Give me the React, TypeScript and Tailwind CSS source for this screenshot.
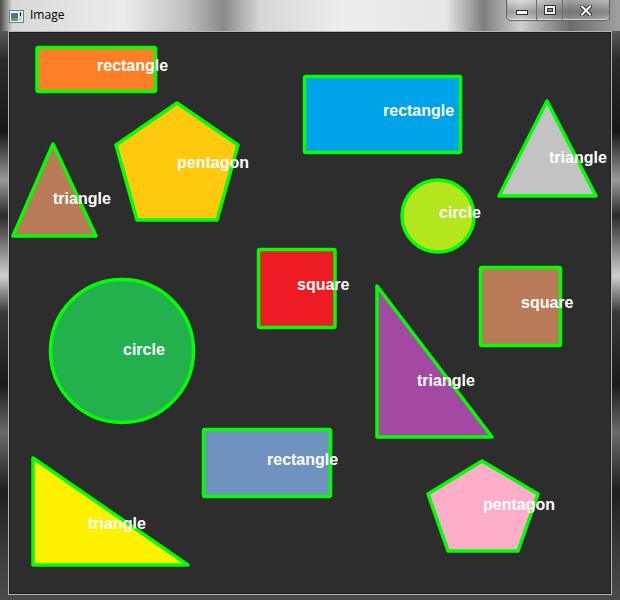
type Shape =
  | { kind: "rect"; x: number; y: number; w: number; h: number; fill: string; label: string; lx: number; ly: number }
  | { kind: "circle"; cx: number; cy: number; r: number; fill: string; label: string; lx: number; ly: number }
  | { kind: "poly"; points: string; fill: string; label: string; lx: number; ly: number };

// contours found on the test image, coordinates in window pixels
const shapes: Shape[] = [
  { kind: "rect", x: 37, y: 47.5, w: 118.5, h: 44, fill: "#ff7f27", label: "rectangle", lx: 97, ly: 71 },
  { kind: "rect", x: 304.5, y: 76.5, w: 156, h: 76, fill: "#00a2e8", label: "rectangle", lx: 383, ly: 116 },
  { kind: "poly", points: "547,101 499,196 596,196", fill: "#c3c3c3", label: "triangle", lx: 549, ly: 163 },
  { kind: "poly", points: "177,103 116,145 137,220 217,220 238,145", fill: "#ffc90e", label: "pentagon", lx: 177, ly: 168 },
  { kind: "poly", points: "53,144 13,236 96,236", fill: "#b97a57", label: "triangle", lx: 53, ly: 204 },
  { kind: "circle", cx: 438, cy: 216, r: 36, fill: "#b5e61d", label: "circle", lx: 439, ly: 218 },
  { kind: "rect", x: 258.5, y: 249.5, w: 76.5, h: 78, fill: "#ed1c24", label: "square", lx: 297, ly: 290 },
  { kind: "rect", x: 480.5, y: 267.5, w: 80, h: 78, fill: "#b97a57", label: "square", lx: 521, ly: 308 },
  { kind: "circle", cx: 122, cy: 351, r: 71.5, fill: "#22b14c", label: "circle", lx: 123, ly: 355 },
  { kind: "poly", points: "377,286 377,437 492,437", fill: "#a349a4", label: "triangle", lx: 417, ly: 386 },
  { kind: "rect", x: 203.5, y: 429.5, w: 127, h: 67, fill: "#7092be", label: "rectangle", lx: 267, ly: 465 },
  { kind: "poly", points: "33,458 33,565 188,565", fill: "#fff200", label: "triangle", lx: 88, ly: 529 },
  { kind: "poly", points: "482,461 428,494 448,551 518,551 538,494", fill: "#ffaec9", label: "pentagon", lx: 483, ly: 510 },
];

function ShapeOutline({ s }: { s: Shape }) {
  const stroke = { fill: s.fill, stroke: "#00ff00", strokeWidth: 3.5, strokeLinejoin: "round" as const };
  if (s.kind === "rect") return <rect x={s.x} y={s.y} width={s.w} height={s.h} rx={1.5} {...stroke} />;
  if (s.kind === "circle") return <circle cx={s.cx} cy={s.cy} r={s.r} {...stroke} />;
  return <polygon points={s.points} {...stroke} />;
}

function WindowIcon() {
  return (
    <svg width="15" height="13" viewBox="0 0 15 13">
      <rect x="0.5" y="0.5" width="14" height="12" fill="#eef2f5" stroke="#6c7c88" />
      <rect x="2" y="3" width="7" height="8" fill="#3f7f8f" />
      <rect x="2" y="8" width="7" height="3" fill="#5fa05a" />
      <rect x="10" y="3" width="3" height="8" fill="#c9d1d8" />
      <rect x="11" y="2" width="1" height="4" fill="#222" />
    </svg>
  );
}

function CaptionButtons() {
  return (
    <div className="flex h-[21px] rounded-b-[5px] border border-t-0 border-[#5d6168] bg-[linear-gradient(180deg,rgba(255,255,255,0.35),rgba(120,120,120,0.45)_60%,rgba(200,200,200,0.4))] shadow-[inset_0_-1px_0_rgba(255,255,255,0.6)]">
      <div className="flex w-[29px] items-end justify-center pb-[5px]">
        <svg width="12" height="5" viewBox="0 0 12 5">
          <rect x="0.5" y="0.5" width="11" height="4" fill="#fff" stroke="#2a3038" />
        </svg>
      </div>
      <div className="flex w-[26px] items-center justify-center border-l border-[#6b6f76]">
        <svg width="12" height="10" viewBox="0 0 12 10">
          <rect x="0.5" y="0.5" width="11" height="9" fill="none" stroke="#2a3038" />
          <rect x="2" y="2" width="8" height="6" fill="none" stroke="#fff" strokeWidth="2" />
          <rect x="3.5" y="3.5" width="5" height="3" fill="none" stroke="#2a3038" />
        </svg>
      </div>
      <div className="flex w-[47px] items-center justify-center border-l border-[#6b6f76]">
        <svg width="12" height="11" viewBox="0 0 12 11">
          <path d="M2 1.5 L10 9.5 M10 1.5 L2 9.5" stroke="#2a3038" strokeWidth="4" strokeLinecap="square" />
          <path d="M2 1.5 L10 9.5 M10 1.5 L2 9.5" stroke="#fff" strokeWidth="2" strokeLinecap="square" />
        </svg>
      </div>
    </div>
  );
}

export default function App() {
  return (
    <div className="flex h-[600px] w-[620px] flex-col overflow-hidden bg-[linear-gradient(180deg,#8a8a8a_0%,#2a2a2a_10%,#181818_22%,#9a9a9a_30%,#2a2a2a_36%,#cfcfcf_46%,#3a3a3a_52%,#1a1a1a_64%,#6a6a6a_72%,#1e1e1e_82%,#3c3c3c_92%,#4a4a4a_100%)]">
      <div className="flex h-[31px] shrink-0 items-start bg-[linear-gradient(90deg,#4a4a4a_0%,#d8d8d8_2%,#ececec_20%,#c0c0c0_30%,#8a8a8a_36%,#d6d6d6_42%,#eeeeee_55%,#e6e6e6_72%,#7e7e7e_78%,#cfcfcf_84%,#6c6c6c_92%,#a0a0a0_100%)]">
        <div className="ml-[9px] mt-[10px]">
          <WindowIcon />
        </div>
        <span className="ml-[6px] mt-[7px] font-['Open_Sans',sans-serif] text-[12px] leading-[16px] text-black">
          Image
        </span>
        <div className="ml-auto mr-[10px]">
          <CaptionButtons />
        </div>
      </div>

      <div className="flex-1 px-[8px] pb-[5px]">
        <div className="border border-[#aeb6be] bg-[#1a1a1a] p-[1px]">
          <svg
            width="600"
            height="560"
            viewBox="10 33 600 560"
            className="block bg-[#2d2d2d]"
          >
            {shapes.map((s, i) => (
              <ShapeOutline key={i} s={s} />
            ))}
            <g className="fill-white font-['Liberation_Sans',Arial,sans-serif] text-[16px] font-bold">
              {shapes.map((s, i) => (
                <text key={i} x={s.lx} y={s.ly}>
                  {s.label}
                </text>
              ))}
            </g>
          </svg>
        </div>
      </div>
    </div>
  );
}
